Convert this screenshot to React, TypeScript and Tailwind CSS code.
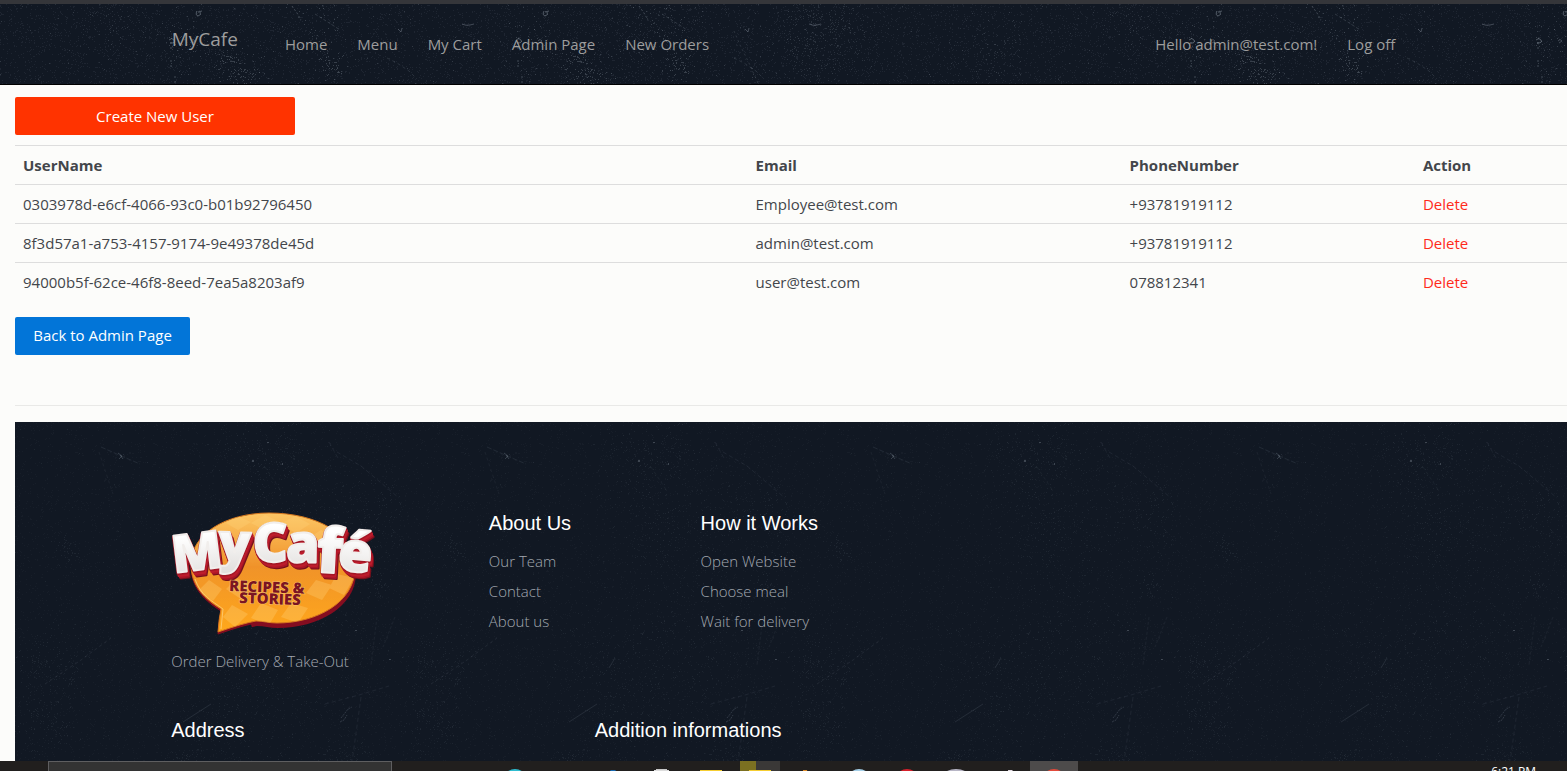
import React from "react";

type User = { id: string; email: string; phone: string };

const users: User[] = [
  { id: "0303978d-e6cf-4066-93c0-b01b92796450", email: "Employee@test.com", phone: "+93781919112" },
  { id: "8f3d57a1-a753-4157-9174-9e49378de45d", email: "admin@test.com", phone: "+93781919112" },
  { id: "94000b5f-62ce-46f8-8eed-7ea5a8203af9", email: "user@test.com", phone: "078812341" },
];

const navLinks = ["Home", "Menu", "My Cart", "Admin Page", "New Orders"];

function generator(seed: number): () => number {
  let s = seed;
  return () => {
    s = (s * 16807) % 2147483647;
    return s / 2147483647;
  };
}

/* Builds a repeatable scatter of one-pixel specks as a single path. */
function specks(seed: number, count: number, width: number, height: number): string {
  const next = generator(seed);
  let d = "";
  for (let i = 0; i < count; i++) {
    d += `M${Math.floor(next() * width)} ${Math.floor(next() * height)}h1v1h-1z`;
  }
  return d;
}

/* Specks gathered around centres given as [x, y, radius, count]. */
function clusters(seed: number, centres: number[][]): string {
  const next = generator(seed);
  let d = "";
  for (const [cx, cy, r, n] of centres) {
    for (let i = 0; i < n; i++) {
      const dx = (next() + next() + next() - 1.5) * r;
      const dy = (next() + next() + next() - 1.5) * r;
      d += `M${Math.round(cx + dx)} ${Math.round(cy + dy)}h1v1h-1z`;
    }
  }
  return d;
}

const headerFine = specks(11, 6500, 1020, 81);
const headerBright = specks(37, 160, 1020, 81);
const headerClusters = clusters(91, [
  [830, 14, 44, 240],
  [800, 55, 44, 120],
  [640, 30, 50, 110],
  [120, 20, 50, 80],
  [1000, 50, 40, 80],
]);
const groupClusters = clusters(19, [
  [82, 62, 16, 70],
  [98, 72, 20, 40],
  [184, 60, 14, 50],
  [166, 18, 30, 40],
  [36, 40, 30, 40],
]);
const footerFine = specks(53, 6500, 386, 386);
const footerBright = specks(71, 120, 386, 386);
const footerClusters = clusters(29, [
  [252, 45, 50, 220],
  [274, 120, 60, 180],
  [364, 85, 40, 120],
  [52, 130, 16, 40],
  [360, 165, 12, 30],
  [280, 230, 70, 220],
  [40, 245, 40, 160],
  [210, 270, 60, 180],
  [30, 300, 30, 100],
  [330, 345, 24, 140],
  [250, 368, 50, 180],
  [168, 340, 14, 50],
]);

function HeaderTexture() {
  const marks = (
    <>
      <path d={groupClusters} fill="#a9b3bf" opacity="0.25" />
      <g fill="none" stroke="#9aa4b0" strokeWidth="1">
        <path d="M22 38v10M22 56v8M23 66M26 72v8" opacity="0.35" strokeDasharray="2 3" />
        <path d="M20 36q3-3 5 0t-4 3" opacity="0.45" />
        <path d="M48 7q-2 4 1 5q4-1 2-4M49 8l4-1" opacity="0.45" />
        <path d="M143 2l5 7l4 7" opacity="0.35" strokeDasharray="2 2" />
        <path d="M166 10l8 5l11 7l6 4" opacity="0.22" strokeDasharray="3 2" />
        <path d="M238 54l10 5l12 8l8 8" opacity="0.18" strokeDasharray="3 3" />
        <path d="M313 20q4 2 8 1l4-1" opacity="0.35" />
        <path d="M249 25l3 3l1-4" opacity="0.35" />
        <path d="M42 37q2-3 4 0l-3 2" opacity="0.35" />
      </g>
    </>
  );
  return (
    <svg className="absolute inset-0 h-full w-full" aria-hidden="true">
      <defs>
        <pattern id="header-grain" width="1020" height="82" patternUnits="userSpaceOnUse">
          <path d={headerFine} fill="#8494a8" opacity="0.11" />
          <path d={headerBright} fill="#a9b3bf" opacity="0.22" />
          <path d={headerClusters} fill="#a9b3bf" opacity="0.16" />
          <path d="M734 27l6 14l8 16l10 22" fill="none" stroke="#9aa4b0" opacity="0.2" strokeDasharray="2 3" />
          <g transform="translate(149 0)">{marks}</g>
          <g transform="translate(496 0)">{marks}</g>
        </pattern>
      </defs>
      <rect width="100%" height="100%" fill="url(#header-grain)" />
    </svg>
  );
}

function FooterTexture() {
  return (
    <svg className="absolute inset-0 h-full w-full" aria-hidden="true">
      <defs>
        <pattern id="footer-grain" width="386" height="386" patternUnits="userSpaceOnUse">
          <path d={footerFine} fill="#8494a8" opacity="0.05" />
          <path d={footerBright} fill="#9aa6b5" opacity="0.1" />
          <path d={footerClusters} fill="#9aa6b5" opacity="0.09" />
          <g fill="none" stroke="#8d99a8" strokeWidth="1">
            <path d="M314 20l10 18M322 30l24 14l38 32" opacity="0.1" strokeDasharray="4 3" />
            <path d="M86 25l18 8l21 9" opacity="0.13" strokeDasharray="5 2" />
            <path d="M103 31l4 3l-3 3M105 33l3 4" opacity="0.3" />
            <path d="M84 30l14 42M250 45l16 24" opacity="0.07" strokeDasharray="3 3" />
            <path d="M30 262l36-24l30-22" opacity="0.12" strokeDasharray="3 3" />
            <path d="M168 300l28-18M208 246l6-10" opacity="0.15" />
            <path d="M310 282l34-9l30-9M346 275l-8 58l-10 50" opacity="0.1" strokeDasharray="4 3" />
            <path d="M326 296l4-5l3-4l4-2M325 300l4-2l3-5" opacity="0.25" strokeDasharray="2 1" />
            <path d="M362 195l-6 48M380 195l-12 30" opacity="0.08" strokeDasharray="3 2" />
          </g>
          <path
            d="M237 38h2v2h-2zM252 20h2v1h-2zM267 41h1v2h-1zM7 342h2v2h-2zM374 237h2v1h-2zM340 208h2v1h-2z"
            fill="#a8b2bf"
            opacity="0.3"
          />
        </pattern>
      </defs>
      <rect width="100%" height="100%" fill="url(#footer-grain)" />
    </svg>
  );
}

const logoLetters = [
  { ch: "M", x: 3, y: 61, size: 52, turn: -7 },
  { ch: "y", x: 47, y: 49, size: 53, turn: 2 },
  { ch: "C", x: 82, y: 50, size: 54, turn: -1 },
  { ch: "a", x: 115, y: 50, size: 53, turn: 1 },
  { ch: "f", x: 145, y: 60, size: 62, turn: 3 },
  { ch: "é", x: 166, y: 58, size: 55, turn: 5 },
];

function LogoWord({ dx, dy, className }: { dx: number; dy: number; className: string }) {
  return (
    <g className={className} strokeLinejoin="round" transform={`translate(${dx} ${dy})`}>
      {logoLetters.map((l) => (
        <text key={l.ch} x={l.x} y={l.y} fontSize={l.size} transform={`rotate(${l.turn} ${l.x} ${l.y})`}>
          {l.ch}
        </text>
      ))}
    </g>
  );
}

function Logo() {
  const bubble =
    "M50 97C29 84 20 70 20 52C20 22 55 1 98 1C146 1 184 22 184 56C184 90 146 111 106 111C98 111 92 109 85 109Q73 111 47 120Q48 106 50 97Z";
  return (
    <svg
      className="block h-[122px] w-[200px] overflow-visible font-['Open_Sans',sans-serif] font-extrabold"
      viewBox="0 0 200 122"
      role="img"
      aria-label="MyCafé Recipes & Stories"
    >
      <defs>
        <linearGradient id="bubble-fill" x1="0" y1="0" x2="0" y2="1">
          <stop offset="0" stopColor="#fcc665" />
          <stop offset="0.45" stopColor="#f0932a" />
          <stop offset="1" stopColor="#ffa81c" />
        </linearGradient>
        <linearGradient id="letter-fill" x1="0" y1="0" x2="0" y2="1">
          <stop offset="0.3" stopColor="#ffffff" />
          <stop offset="1" stopColor="#dedbd9" />
        </linearGradient>
        <clipPath id="bubble-clip">
          <path d={bubble} />
        </clipPath>
      </defs>
      <path d={bubble} fill="#850d20" stroke="#850d20" strokeWidth="1" transform="translate(0 2)" />
      <path d={bubble} fill="#850d20" transform="translate(1 5)" clipPath="url(#bubble-low)" />
      <clipPath id="bubble-low">
        <path d="M60 40H190V125H84Z" />
      </clipPath>
      <path d={bubble} fill="url(#bubble-fill)" stroke="#d8781e" strokeWidth="1" />
      <g clipPath="url(#bubble-clip)" fill="#ffd37c" opacity="0.3">
        <path d="M66 4l14 6l-13 8l-12-7zM94 3l15 7l-14 9l-15-8zM124 4l15 8l-14 9l-16-9zM150 18l13 8l-12 9l-13-9z" />
        <path d="M38 68l13 9l-9 12l-15-10zM66 66l15 8l-11 13l-15-10zM61 93l16 9l-13 13l-12-10zM90 91l17 7l-9 15l-18-7zM120 91l17 5l-10 15l-17-6zM145 68l16 5l-10 15l-16-7zM166 62l17 4l-10 17l-15-7z" />
      </g>
      <path d="M24 67C30 84 40 88 52 97Q51 107 50 117" fill="none" stroke="#ffe09b" strokeWidth="1" opacity="0.6" />
      <LogoWord dx={3} dy={6} className="fill-[#74101c] stroke-[#74101c] stroke-2" />
      <LogoWord dx={2} dy={5} className="fill-[#a81526] stroke-[#a81526] stroke-2" />
      <LogoWord dx={1} dy={3} className="fill-[#bd1c2c] stroke-[#bd1c2c] stroke-3" />
      <LogoWord dx={0} dy={1} className="fill-[#a31625] stroke-[#a31625] stroke-3" />
      <LogoWord dx={0} dy={0} className="fill-[url(#letter-fill)] stroke-[#f1eeec] stroke-2" />
      <g fill="#7b1522" stroke="#ffc469" strokeWidth="1" paintOrder="stroke">
        <text x="58" y="79" fontSize="15" transform="rotate(2 58 79)">
          RECIPES &amp;
        </text>
        <text x="68" y="91" fontSize="15" transform="rotate(2 68 91)">
          STORIES
        </text>
      </g>
    </svg>
  );
}

function SiteHeader() {
  return (
    <header className="relative h-[85px] shrink-0 border-t-4 border-b border-t-[#35363a] border-b-black bg-[#111823]">
      <HeaderTexture />
      <nav className="relative mx-auto flex h-full w-4/5 items-center px-[15px] text-[15px] text-[#9d9d9d]">
        <a href="#" className="mr-8 -mt-[10px] text-[19px] leading-6">
          MyCafe
        </a>
        <ul className="flex">
          {navLinks.map((label) => (
            <li key={label}>
              <a href="#" className="block px-[15px] leading-6">
                {label}
              </a>
            </li>
          ))}
        </ul>
        <ul className="ml-auto -mr-[15px] flex">
          <li>
            <a href="#" className="block px-[15px] leading-6">
              Hello admin@test.com!
            </a>
          </li>
          <li>
            <a href="#" className="block px-[15px] leading-6">
              Log off
            </a>
          </li>
        </ul>
      </nav>
    </header>
  );
}

function UserTable() {
  return (
    <table className="mt-[10px] w-full table-fixed border-collapse text-left leading-6">
      <colgroup>
        <col className="w-[47.2%]" />
        <col className="w-[24.1%]" />
        <col className="w-[18.9%]" />
        <col />
      </colgroup>
      <thead>
        <tr className="h-[39px] border-t border-[#dddddd]">
          <th className="px-2 font-bold">UserName</th>
          <th className="px-2 font-bold">Email</th>
          <th className="px-2 font-bold">PhoneNumber</th>
          <th className="px-2 font-bold">Action</th>
        </tr>
      </thead>
      <tbody>
        {users.map((u) => (
          <tr key={u.id} className="h-[39px] border-t border-[#dddddd]">
            <td className="px-2">{u.id}</td>
            <td className="px-2">{u.email}</td>
            <td className="px-2">{u.phone}</td>
            <td className="px-2">
              <a href="#" className="text-[#ff2a1a]">
                Delete
              </a>
            </td>
          </tr>
        ))}
      </tbody>
    </table>
  );
}

function FooterColumn({ title, links }: { title: string; links: string[] }) {
  return (
    <div className="col-span-2 px-[15px]">
      <h4 className="font-['Liberation_Sans',Arial,sans-serif] text-xl leading-[22px] font-normal text-white">{title}</h4>
      <ul className="mt-3">
        {links.map((l) => (
          <li key={l}>
            <a href="#" className="block leading-[30px]">
              {l}
            </a>
          </li>
        ))}
      </ul>
    </div>
  );
}

function SiteFooter() {
  return (
    <footer className="relative ml-[15px] min-h-0 flex-1 overflow-hidden bg-[#111823] font-light text-[#a3a8b1]">
      <FooterTexture />
      <div className="relative mx-auto w-4/5 pt-[90px] pl-px">
        <div className="-mx-[15px] grid grid-cols-12">
          <div className="col-span-3 px-[15px]">
            <Logo />
            <p className="mt-3 leading-[30px]">Order Delivery &amp; Take-Out</p>
          </div>
          <FooterColumn title="About Us" links={["Our Team", "Contact", "About us"]} />
          <FooterColumn title="How it Works" links={["Open Website", "Choose meal", "Wait for delivery"]} />
        </div>
        <div className="-mx-[15px] mt-[43px] grid grid-cols-12 font-['Liberation_Sans',Arial,sans-serif] text-xl leading-[22px] font-normal text-white">
          <h4 className="col-span-4 px-[15px]">Address</h4>
          <h4 className="col-span-4 px-[15px]">Addition informations</h4>
        </div>
      </div>
    </footer>
  );
}

function Taskbar() {
  return (
    <div className="flex h-[10px] shrink-0 items-start overflow-hidden bg-[#211f1e]">
      <input
        aria-label="Search"
        className="ml-12 h-10 w-[344px] shrink-0 border border-[#5e5e60] bg-[#333333] outline-none"
      />
      <svg className="ml-[108px] h-10 w-[578px] shrink-0" viewBox="0 0 578 40" aria-hidden="true">
        <rect x="240" width="16" height="40" fill="#7b7021" />
        <rect x="256" width="24" height="40" fill="#3a3837" />
        <rect x="530" width="48" height="40" fill="#4d4b4b" />
        <circle cx="15" cy="20" r="12" fill="#2fbdd0" />
        <path d="M111 9h4l5 4v20h-14V13z" fill="#1768b0" />
        <rect x="156" y="8" width="11" height="24" fill="#c8c8c8" />
        <rect x="154" y="9" width="15" height="20" fill="#dddddd" />
        <path d="M200 9h22v20h-22zM249 9h22v20h-22z" fill="#f6ce31" />
        <path d="M303 9h4l4 20h-9z" fill="#dc8c2c" />
        <circle cx="359" cy="20" r="12" fill="#a4cfe8" />
        <circle cx="407" cy="20" r="12" fill="#d8202b" />
        <ellipse cx="456" cy="20" rx="16" ry="12" fill="#b8b6c6" />
        <path d="M508 9h4l4 4l-6 18z" fill="#e4dce4" />
        <circle cx="554" cy="20" r="12" fill="#e24a3b" />
      </svg>
      <time className="mt-1 mr-[31px] ml-auto text-xs leading-[14px] text-white">6:21 PM</time>
    </div>
  );
}

export default function App() {
  return (
    <div className="flex h-screen flex-col overflow-hidden bg-[#fcfcfa] font-['Open_Sans','Noto_Sans',sans-serif] text-[15px] text-[#43464b]">
      <SiteHeader />
      <main className="shrink-0 pt-3 pl-[15px]">
        <button type="button" className="block h-[38px] w-[280px] rounded-xs bg-[#ff3300] text-white">
          Create New User
        </button>
        <UserTable />
        <button type="button" className="mt-[15px] block h-[38px] w-[175px] rounded-xs bg-[#0275d8] text-white">
          Back to Admin Page
        </button>
        <hr className="mt-[50px] mb-4 border-[#e9e9e7]" />
      </main>
      <SiteFooter />
      <Taskbar />
    </div>
  );
}
